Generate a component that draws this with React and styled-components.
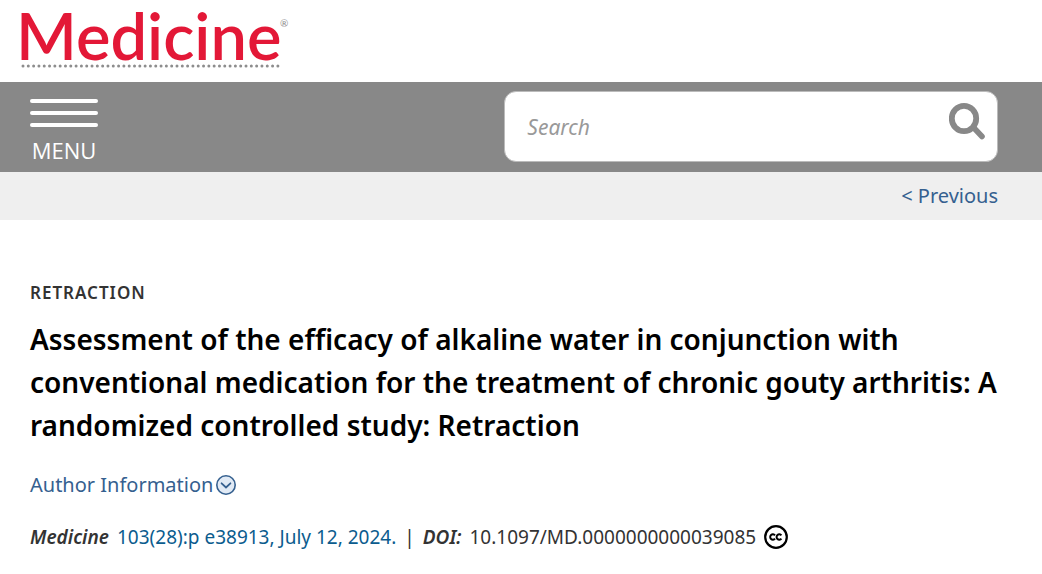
import { useState } from "react";
import styled, { createGlobalStyle, ThemeProvider } from "styled-components";

const theme = {
  brand: "#e31837",
  bar: "#888888",
  strip: "#efefef",
  link: "#35608f",
  cite: "#0b5c8e",
  text: "#333333",
  sans: '"Noto Sans", "Open Sans", sans-serif',
};

const GlobalStyle = createGlobalStyle`
  * {
    box-sizing: border-box;
  }

  body {
    margin: 0;
    background-color: #fff;
    color: ${({ theme }) => theme.text};
    font-family: ${({ theme }) => theme.sans};
  }
`;

const Masthead = styled.header`
  display: flex;
  padding: 0 16px;
`;

const LogoLink = styled.a`
  display: flex;
  color: ${({ theme }) => theme.brand};
  text-decoration: none;
`;

const LogoSvg = styled.svg`
  overflow: visible;
  font-family: Lato, sans-serif;
`;

const NavBar = styled.nav`
  display: flex;
  justify-content: space-between;
  align-items: flex-start;
  padding: 9px 44px 7px 30px;
  background-color: ${({ theme }) => theme.bar};
`;

const MenuButton = styled.button`
  display: flex;
  flex-direction: column;
  gap: 8px;
  width: 68px;
  padding: 8px 0 0;
  border: none;
  background: none;
  color: #fff;
  font-family: "Open Sans", sans-serif;
  font-size: 22px;
  line-height: 30px;
  text-align: center;
  cursor: pointer;
`;

const MenuLine = styled.span`
  width: 100%;
  height: 4px;
  border-radius: 2px;
  background-color: #fff;
`;

const MenuLabel = styled.span`
  width: 100%;
`;

const SearchForm = styled.form`
  display: flex;
  align-items: flex-start;
  width: 51%;
  height: 71px;
  border: 1px solid #bbb;
  border-radius: 12px;
  background-color: #fff;
`;

const SearchInput = styled.input`
  flex: 1;
  min-width: 0;
  height: 100%;
  padding: 0 0 0 22px;
  border: none;
  outline: none;
  background: none;
  color: ${({ theme }) => theme.text};
  font-family: ${({ theme }) => theme.sans};
  font-size: 21px;

  &::placeholder {
    color: #999;
    font-style: italic;
    opacity: 1;
  }
`;

const SearchButton = styled.button`
  display: flex;
  padding: 10px;
  border: none;
  background: none;
  color: ${({ theme }) => theme.bar};
  cursor: pointer;
`;

const Pager = styled.div`
  display: flex;
  justify-content: flex-end;
  padding: 0 44px;
  background-color: ${({ theme }) => theme.strip};
  line-height: 48px;
`;

const PagerLink = styled.a`
  color: ${({ theme }) => theme.link};
  font-size: 20px;
  text-decoration: none;
`;

const Article = styled.main`
  padding: 60px 44px 20px 30px;
`;

const Category = styled.p`
  margin: 0;
  font-size: 17px;
  font-weight: 600;
  letter-spacing: 1px;
  line-height: 26px;
  text-transform: uppercase;
`;

const Title = styled.h1`
  margin: 12px 0 24px;
  color: #000;
  font-size: 28px;
  font-weight: 600;
  line-height: 43px;
`;

const AuthorToggle = styled.button`
  display: flex;
  align-items: center;
  gap: 2px;
  padding: 0;
  border: none;
  background: none;
  color: ${({ theme }) => theme.link};
  font-family: ${({ theme }) => theme.sans};
  font-size: 20px;
  line-height: 28px;
  cursor: pointer;
`;

const Citation = styled.p`
  display: flex;
  flex-wrap: wrap;
  align-items: center;
  column-gap: 8px;
  margin: 24px 0 0;
  font-size: 19px;
  line-height: 28px;
`;

const Term = styled.em`
  font-weight: 600;
`;

const CiteLink = styled.a`
  color: ${({ theme }) => theme.cite};
  text-decoration: none;
`;

const LicenseLink = styled.a`
  display: flex;
  color: #000;
`;

const Logo = () => (
  <LogoSvg width="276" height="82" viewBox="0 0 276 82" fill="currentColor">
    <text x="0" y="60" fontSize="65" fontWeight="600">
      Medicine
    </text>
    <text x="264" y="27" fontSize="10" fill="#8d8d8d">
      ®
    </text>
    <path
      d="M7 66H263"
      stroke="#8d8d8d"
      strokeWidth="3"
      strokeLinecap="round"
      strokeDasharray="0 5.31"
    />
  </LogoSvg>
);

const SearchIcon = () => (
  <svg width="38" height="38" viewBox="0 0 38 38" fill="none" stroke="currentColor" aria-hidden="true">
    <ellipse cx="15" cy="16.5" rx="12.2" ry="12.7" strokeWidth="5.8" />
    <path d="M25 26 33 34.5" strokeWidth="5.6" strokeLinecap="round" />
  </svg>
);

const ChevronIcon = () => (
  <svg width="22" height="22" viewBox="0 0 22 22" fill="none" stroke="currentColor" aria-hidden="true">
    <circle cx="11" cy="11" r="9.2" fill="#e1eaf5" strokeWidth="1.6" />
    <path d="M6.6 9.3 11 13.4l4.4-4.1" strokeWidth="1.8" strokeLinecap="round" />
  </svg>
);

const CreativeCommonsIcon = () => (
  <svg width="24" height="24" viewBox="0 0 24 24" fill="none" stroke="currentColor" aria-hidden="true">
    <circle cx="12" cy="12" r="10.8" strokeWidth="2.2" />
    <path d="M11 10.3a2.7 2.7 0 1 0 0 3.4M17.4 10.3a2.7 2.7 0 1 0 0 3.4" strokeWidth="2" />
  </svg>
);

const App = () => {
  const [query, setQuery] = useState("");

  return (
    <ThemeProvider theme={theme}>
      <GlobalStyle />
      <Masthead>
        <LogoLink href="#">
          <Logo />
        </LogoLink>
      </Masthead>
      <NavBar>
        <MenuButton type="button">
          <MenuLine />
          <MenuLine />
          <MenuLine />
          <MenuLabel>MENU</MenuLabel>
        </MenuButton>
        <SearchForm role="search" onSubmit={(e) => e.preventDefault()}>
          <SearchInput
            type="text"
            aria-label="Search"
            placeholder="Search"
            value={query}
            onChange={(e) => setQuery(e.target.value)}
          />
          <SearchButton type="submit" aria-label="Search">
            <SearchIcon />
          </SearchButton>
        </SearchForm>
      </NavBar>
      <Pager>
        <PagerLink href="#">&lt; Previous</PagerLink>
      </Pager>
      <Article>
        <Category>Retraction</Category>
        <Title>
          Assessment of the efficacy of alkaline water in conjunction with
          conventional medication for the treatment of chronic gouty arthritis:
          A randomized controlled study: Retraction
        </Title>
        <AuthorToggle type="button">
          Author Information
          <ChevronIcon />
        </AuthorToggle>
        <Citation>
          <Term>Medicine</Term>
          <CiteLink href="#">103(28):p e38913, July 12, 2024.</CiteLink>
          <span>|</span>
          <Term>DOI:</Term>
          <span>10.1097/MD.0000000000039085</span>
          <LicenseLink href="#" aria-label="Creative Commons license">
            <CreativeCommonsIcon />
          </LicenseLink>
        </Citation>
      </Article>
    </ThemeProvider>
  );
};

export default App;
